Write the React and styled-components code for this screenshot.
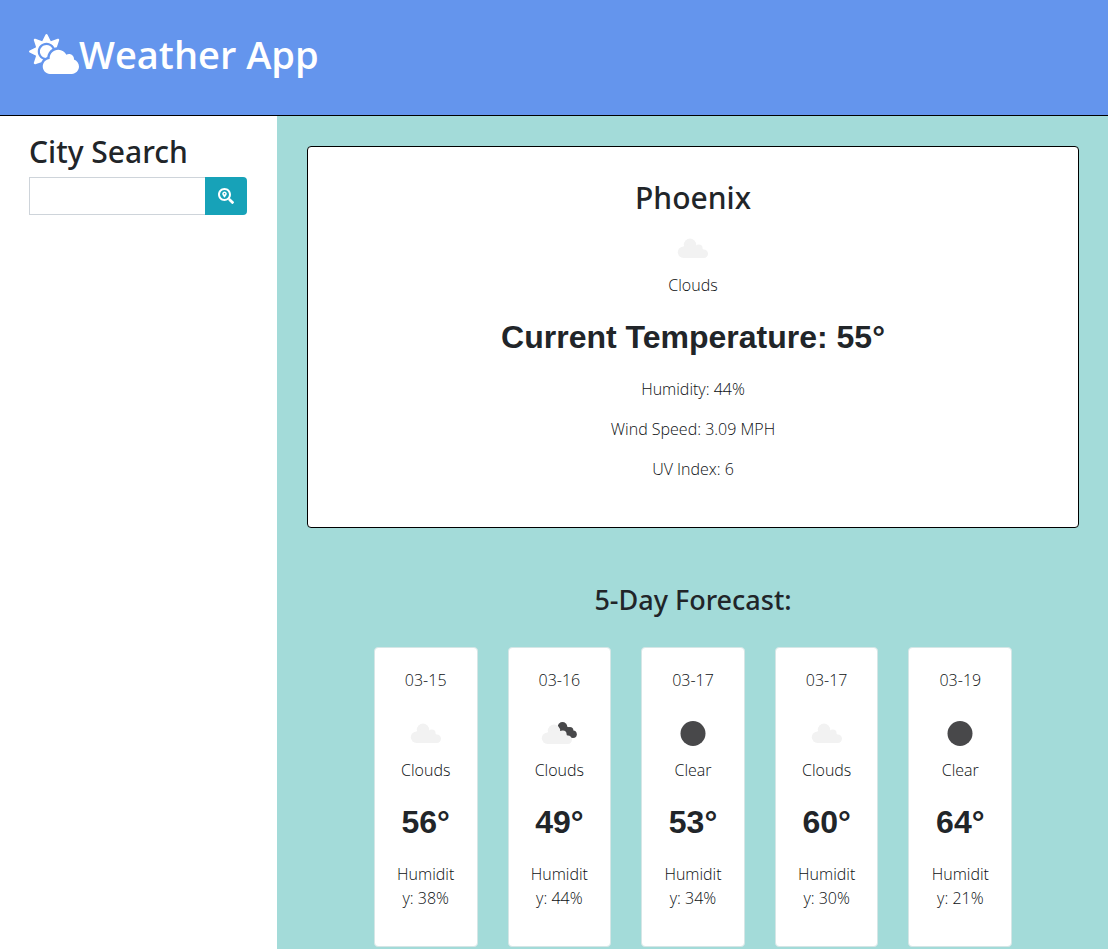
import React from "react";
import styled, { createGlobalStyle } from "styled-components";
import { FaCloudSun, FaSearchLocation } from "react-icons/fa";

const GlobalStyle = createGlobalStyle`
  *, *::before, *::after { box-sizing: border-box; }
  body {
    margin: 0;
    font-family: "Open Sans", "Noto Sans", sans-serif;
    font-size: 16px;
    font-weight: 300;
    line-height: 24px;
    color: #212529;
    background: #fff;
  }
  h1, h2, h3, p { margin: 0; }
`;

const Page = styled.div`
  min-height: 100vh;
  display: flex;
  flex-direction: column;
`;

const Header = styled.header`
  padding: 30px 29px 37px;
  background: #6495ed;
  border-bottom: 1px solid #000;
`;

const Title = styled.h1`
  display: flex;
  align-items: center;
  color: #fff;
  font-size: 38px;
  font-weight: 600;
  line-height: 48px;

  svg {
    width: 50px;
    height: 40px;
  }
`;

const Columns = styled.div`
  flex: 1;
  display: flex;
`;

const Sidebar = styled.aside`
  flex: 0 0 25%;
  min-width: 0;
  padding: 15px 30px 0 29px;
`;

const Heading = styled.h2`
  display: block;
  margin-bottom: 4px;
  font-family: "Noto Sans", "Open Sans", sans-serif;
  font-size: 30px;
  font-weight: 500;
  line-height: 42px;
`;

const SearchForm = styled.form`
  display: flex;
  height: 38px;
`;

const SearchInput = styled.input`
  flex: 1;
  min-width: 0;
  padding: 6px 12px;
  border: 1px solid #ced4da;
  border-right: 0;
  border-radius: 0;
  font: inherit;
  color: #495057;
`;

const SearchButton = styled.button`
  display: flex;
  align-items: center;
  justify-content: center;
  width: 42px;
  padding: 0;
  border: 0;
  border-radius: 0 4px 4px 0;
  background: #17a2b8;
  color: #fff;
  font-size: 16px;
`;

const Main = styled.main`
  flex: 1;
  min-width: 0;
  padding: 30px 29px 0 30px;
  background: #a3dbd9;
`;

const Card = styled.section`
  background: #fff;
  border-radius: 4px;
  text-align: center;
`;

const CurrentCard = styled(Card)`
  padding: 30px;
  border: 1px solid #000;
`;

const DayCard = styled(Card)`
  padding: 20px;
  border: 1px solid #d5e6e6;
  overflow-wrap: anywhere;
`;

const Text = styled.p`
  margin-bottom: 16px;
  color: #0c0f12;
`;

const Temperature = styled.p`
  margin-bottom: 16px;
  font-family: "Liberation Sans", Arial, sans-serif;
  font-size: 32px;
  font-weight: 700;
  line-height: 48px;
`;

const Icon = styled.svg`
  display: block;
  width: 50px;
  height: 50px;
  margin: 0 auto;
`;

const ForecastTitle = styled.h3`
  margin: 55px 0 30px;
  font-family: "Noto Sans", "Open Sans", sans-serif;
  font-size: 27px;
  font-weight: 500;
  line-height: 34px;
  text-align: center;
`;

const DayRow = styled.div`
  display: flex;
  justify-content: center;
  margin: 0 -15px;
`;

const DayColumn = styled.div`
  flex: 0 0 calc(100% / 6);
  min-width: 0;
  padding: 0 15px;
`;

function WeatherIcon({ kind }) {
  return (
    <Icon viewBox="0 0 50 50" aria-hidden="true">
      {kind === "clear" && <circle cx="25" cy="25.5" r="12.5" fill="#48484a" />}
      {kind === "broken" && (
        <g fill="#48484a">
          <circle cx="28.5" cy="18.8" r="4.8" />
          <circle cx="32.5" cy="22.5" r="3.8" />
          <circle cx="35.8" cy="22.5" r="3.6" />
          <circle cx="39" cy="26.2" r="3.8" />
          <circle cx="35.5" cy="26.5" r="3.8" />
        </g>
      )}
      {kind !== "clear" && (
        <g
          fill="#f2f2f2"
          transform={kind === "broken" ? "translate(-2 1)" : undefined}
        >
          <circle cx="22" cy="21.8" r="6.2" />
          <circle cx="30.8" cy="25.2" r="3.8" />
          <circle cx="15.5" cy="29.2" r="5.7" />
          <circle cx="35.8" cy="30.7" r="4.2" />
          <path d="M15.5 34.9H35.8V27L31 23.5L22 21L15.5 23.5Z" />
        </g>
      )}
    </Icon>
  );
}

const days = [
  { date: "03-15", icon: "clouds", sky: "Clouds", temp: 56, humidity: 38 },
  { date: "03-16", icon: "broken", sky: "Clouds", temp: 49, humidity: 44 },
  { date: "03-17", icon: "clear", sky: "Clear", temp: 53, humidity: 34 },
  { date: "03-17", icon: "clouds", sky: "Clouds", temp: 60, humidity: 30 },
  { date: "03-19", icon: "clear", sky: "Clear", temp: 64, humidity: 21 },
];

export default function App() {
  return (
    <>
      <GlobalStyle />
      <Page>
        <Header>
          <Title>
            <FaCloudSun aria-hidden="true" />
            Weather App
          </Title>
        </Header>
        <Columns>
          <Sidebar>
            <Heading as="label" htmlFor="city">
              City Search
            </Heading>
            <SearchForm onSubmit={(event) => event.preventDefault()}>
              <SearchInput id="city" type="text" />
              <SearchButton type="submit" aria-label="Search">
                <FaSearchLocation />
              </SearchButton>
            </SearchForm>
          </Sidebar>
          <Main>
            <CurrentCard>
              <Heading>Phoenix</Heading>
              <WeatherIcon kind="clouds" />
              <Text>Clouds</Text>
              <Temperature>Current Temperature: 55°</Temperature>
              <Text>Humidity: 44%</Text>
              <Text>Wind Speed: 3.09 MPH</Text>
              <Text>UV Index: 6</Text>
            </CurrentCard>
            <ForecastTitle>5-Day Forecast:</ForecastTitle>
            <DayRow>
              {days.map((day, index) => (
                <DayColumn key={index}>
                  <DayCard>
                    <Text>{day.date}</Text>
                    <WeatherIcon kind={day.icon} />
                    <Text>{day.sky}</Text>
                    <Temperature>{day.temp}°</Temperature>
                    <Text>{`Humidity: ${day.humidity}%`}</Text>
                  </DayCard>
                </DayColumn>
              ))}
            </DayRow>
          </Main>
        </Columns>
      </Page>
    </>
  );
}
